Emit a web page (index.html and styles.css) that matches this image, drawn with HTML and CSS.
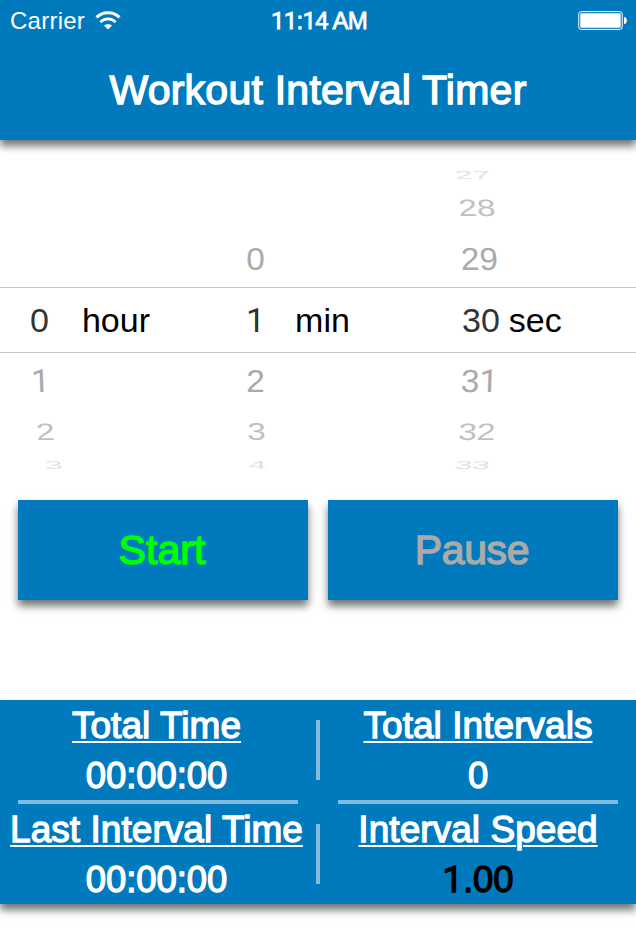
FILE: index.html
```html
<!DOCTYPE html>
<html lang="en">
<head>
<meta charset="utf-8">
<title>Workout Interval Timer</title>
<link rel="stylesheet" href="styles.css">
</head>
<body>
<header class="header">
  <div class="status">
    <div class="carrier"><span>Carrier</span>
      <svg class="wifi" width="26" height="20" viewBox="0 0 26 20" fill="none" stroke="#fff">
        <path d="M1.5 6.4A16.5 16.5 0 0 1 24.5 6.4" stroke-width="3"/>
        <path d="M5.4 11.1A10.8 10.8 0 0 1 20.6 11.1" stroke-width="2.7"/>
        <path d="M13 18.4L8.9 14.6A6 6 0 0 1 17.1 14.6Z" fill="#fff" stroke="none"/>
      </svg>
    </div>
    <div class="clock"><span class="one">11</span>:<span class="one">1</span>4 AM</div>
    <svg class="battery" width="50" height="20" viewBox="0 0 50 20">
      <rect x=".75" y=".6" width="43.5" height="17.8" rx="2.6" fill="none" stroke="#fff" stroke-width="1"/>
      <rect x="2.3" y="2.2" width="40.4" height="14.6" rx="1.3" fill="#fff"/>
      <path d="M46 6C48 6 48.8 7.6 48.8 9.5S48 13 46 13Z" fill="#fff"/>
    </svg>
  </div>
  <h1 class="title">Workout Interval Timer</h1>
</header>
<main>
  <section class="picker">
    <div class="row far above"><span class="cell hour"></span><span class="cell min"></span><span class="cell sec"><b>27</b></span></div>
    <div class="row mid above"><span class="cell hour"></span><span class="cell min"></span><span class="cell sec"><b>28</b></span></div>
    <div class="row near above"><span class="cell hour"></span><span class="cell min"><b>0</b></span><span class="cell sec"><b>29</b></span></div>
    <div class="row selected"><span class="cell hour"><b>0</b><i>hour</i></span><span class="cell min"><b class="one">1</b><i>min</i></span><span class="cell sec"><b>30</b><i>sec</i></span></div>
    <div class="row near"><span class="cell hour"><b class="one">1</b></span><span class="cell min"><b>2</b></span><span class="cell sec"><b>3<span class="one">1</span></b></span></div>
    <div class="row mid"><span class="cell hour"><b>2</b></span><span class="cell min"><b>3</b></span><span class="cell sec"><b>32</b></span></div>
    <div class="row far"><span class="cell hour"><b>3</b></span><span class="cell min"><b>4</b></span><span class="cell sec"><b>33</b></span></div>
  </section>
  <div class="actions">
    <button class="button start">Start</button>
    <button class="button pause">Pause</button>
  </div>
  <section class="stats">
    <div class="stat left"><span class="label">Total Time</span><span class="value">00:00:00</span></div>
    <div class="vline"></div>
    <div class="stat"><span class="label">Total Intervals</span><span class="value">0</span></div>
    <div class="hline"></div><div></div><div class="hline"></div>
    <div class="stat left"><span class="label">Last Interval Time</span><span class="value">00:00:00</span></div>
    <div class="vline"></div>
    <div class="stat"><span class="label">Interval Speed</span><span class="value dark"><span class="one">1</span>.00</span></div>
  </section>
</main>
</body>
</html>
```
FILE: styles.css
```css
* { box-sizing: border-box; }
body {
  margin: 0;
  height: 934px;
  overflow: hidden;
  background: #fff;
  font-family: "Liberation Sans", Arial, sans-serif;
}
.header {
  height: 140px;
  background: #0079bd;
  color: #fff;
  box-shadow: 0 6px 8px rgba(0, 0, 0, .55);
}
.status {
  display: grid;
  grid-template-columns: 1fr auto 1fr;
  height: 40px;
  padding: 0 8px 0 10px;
  font-size: 24px;
  line-height: 41px;
}
.carrier { display: flex; letter-spacing: .25px; }
.wifi { margin: 11px 0 0 10px; }
.clock { letter-spacing: -.7px; -webkit-text-stroke: .8px #fff; }
.battery { justify-self: end; margin-top: 11px; }
/* Roboto draws the numeral one without a foot */
.one { font-family: Roboto, "Liberation Sans", sans-serif; line-height: 1; }
.title {
  margin: 0;
  text-align: center;
  font-size: 41px;
  font-weight: 400;
  line-height: 100px;
  letter-spacing: .25px;
  -webkit-text-stroke: 1.4px #fff;
}
.picker { padding-top: 25px; height: 360px; }
.row {
  display: grid;
  grid-template-columns: 217px 214px 205px;
  align-items: center;
  font-size: 34px;
}
.cell { display: flex; align-items: center; height: 100%; min-height: 0; }
.cell b, .cell i { font-weight: 400; font-style: normal; line-height: 40px; }
.hour { padding-left: 30px; }
.min { padding-left: 29px; }
.sec { padding-left: 31px; }
.far { height: 20px; color: #e2e2e2; }
.far .cell { height: 20px; }
.far b { margin: -10px 0; }
.mid { height: 46px; color: #c0c0c0; }
.near { height: 56px; color: #aaa; }
.selected {
  height: 66px;
  border: solid #c8c8c8;
  border-width: 1px 0;
  color: #333;
}
.selected i { color: #000; }
.hour i { margin-left: 33px; }
.min i { margin-left: 30px; }
.sec i { margin-left: 9px; }
.near b { transform: scale(.98, .94); }
.mid .min b { transform: translateX(1px) scale(.98, .7); }
.far .min b { transform: translateX(2px) scale(.92, .34); }
.near .hour b { transform: translateX(1px) skewX(2deg) scale(.98, .94); }
.mid .hour b { transform: translateX(6px) skewX(4deg) scale(.98, .7); }
.far .hour b { transform: translateX(14px) skewX(8deg) scale(.94, .34); }
.near .sec b { transform: translateX(-1.5px) skewX(-2deg) scale(.98, .94); }
.mid .sec b { transform: translateX(-4px) skewX(-4deg) scale(.98, .7); }
.far .sec b { transform: translateX(-8.5px) skewX(-8deg) scale(.93, .34); }
.near.above .sec b { transform: translateX(-1.5px) skewX(2deg) scale(.98, .94); }
.mid.above .sec b { transform: translateX(-4px) skewX(4deg) scale(.98, .7); }
.far.above .sec b { transform: translateX(-8.5px) skewX(8deg) scale(.93, .34); }
.actions { display: flex; gap: 20px; padding: 0 18px; }
.button {
  width: 290px;
  height: 100px;
  padding: 0 2px 0 0;
  border: 0;
  background: #0079bd;
  box-shadow: 0 6px 8px rgba(0, 0, 0, .55);
  font: 41px "Liberation Sans", Arial, sans-serif;
  -webkit-text-stroke: 1.4px currentColor;
}
.start { color: #0f0; letter-spacing: .1px; }
.pause { color: #aaa; letter-spacing: -.4px; }
.stats {
  display: grid;
  grid-template-columns: 316px 4px 316px;
  grid-template-rows: 100px 4px 100px;
  margin-top: 100px;
  background: #0079bd;
  color: #fff;
  box-shadow: 0 6px 8px rgba(0, 0, 0, .55);
}
.stat {
  display: flex;
  flex-direction: column;
  align-items: center;
  padding-top: 1px;
  font-size: 37px;
  line-height: 50px;
  white-space: nowrap;
  -webkit-text-stroke: 1.3px currentColor;
}
.left { padding-right: 3px; }
.label {
  letter-spacing: .05px;
  text-decoration: underline;
  text-decoration-thickness: 2px;
  text-underline-offset: 3px;
}
.value { font-size: 36.5px; letter-spacing: -.1px; }
.dark { color: #000; }
.vline { height: 60px; margin-top: 20px; background: #80bcde; }
.hline { width: 280px; margin: 0 auto; background: #80bcde; }
```
